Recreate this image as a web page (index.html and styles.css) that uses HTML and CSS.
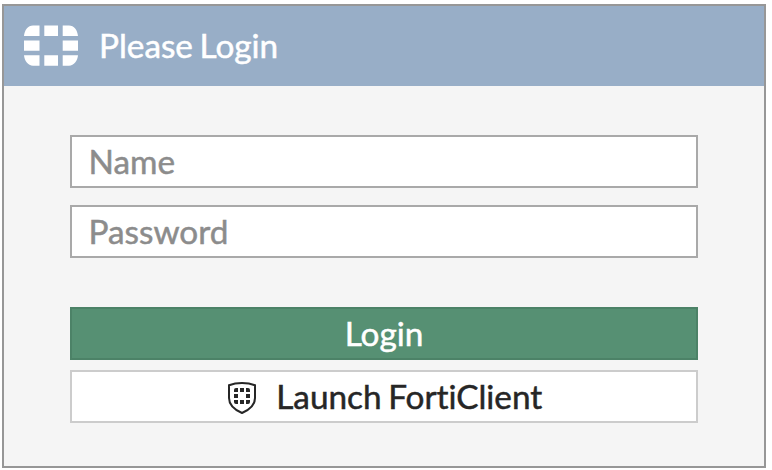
FILE: index.html
```html
<!DOCTYPE html>
<html lang="en">
<head>
<meta charset="utf-8">
<title>Please Login</title>
<link rel="stylesheet" href="styles.css">
</head>
<body>
<main class="panel">
  <header class="panel-header">
    <svg class="logo" viewBox="0 0 54 41" aria-hidden="true">
      <path d="M0 11C.5 5 4 .4 9 .4H15.5V11ZM20.3 .4H34V11H20.3ZM38.7 .4H45C50 .4 53.5 5 54 11H38.7ZM0 15.5H15.5V25.7H0ZM38.7 15.5H54V25.7H38.7ZM0 30.3H15.5V40.7H9C4 40.7 .5 36 0 30.3ZM20.3 30.3H34V40.7H20.3ZM38.7 30.3H54C53.5 36 50 40.7 45 40.7H38.7Z"/>
    </svg>
    <h1 class="title">Please Login</h1>
  </header>
  <form class="form">
    <input class="field" type="text" placeholder="Name" aria-label="Name">
    <input class="field" type="password" placeholder="Password" aria-label="Password">
    <button class="button primary" type="button">Login</button>
    <button class="button secondary" type="button">
      <svg class="shield" viewBox="0 0 30 34" aria-hidden="true">
        <path class="outline" d="M15 2C10.5 2 6 2.7 2 4.2V17C2 24 7 28.5 15 32C23 28.5 28 24 28 17V4.2C24 2.7 19.5 2 15 2Z"/>
        <path d="M9 7H11V11H7V9Q7 7 9 7ZM13 7H17V11H13ZM19 7H21Q23 7 23 9V11H19ZM7 13H11V17H7ZM19 13H23V17H19ZM7 19H11V23H9Q7 23 7 21ZM13 19H17V23H13ZM19 19H23V21Q23 23 21 23H19Z"/>
      </svg>
      <span>Launch FortiClient</span>
    </button>
  </form>
</main>
</body>
</html>
```
FILE: styles.css
```css
* {
  box-sizing: border-box;
}

body {
  margin: 0;
  padding: 4px 6px 2px 2px;
  background: #fff;
  font-family: Lato, "Liberation Sans", sans-serif;
  font-size: 33.33px;
}

.panel {
  height: 464px;
  border: 2px solid #979797;
  background: #f5f5f5;
}

.panel-header {
  display: flex;
  align-items: center;
  gap: 21px;
  height: 80px;
  padding: 0 0 2px 20px;
  background: #98aec7;
  color: #fff;
}

.logo {
  width: 54px;
  height: 41px;
  fill: currentColor;
}

.title,
.field,
.button {
  word-spacing: -2px;
  font-variant-ligatures: none;
  -webkit-text-stroke: 0.5px currentColor;
}

.title {
  margin: 0;
  font-size: 33.33px;
  font-weight: 400;
  line-height: 40px;
}

.form {
  display: flex;
  flex-direction: column;
  padding: 49px 66px 0;
}

.field,
.button {
  width: 100%;
  height: 53px;
  margin: 0;
  border: 2px solid #a9a9a9;
  border-radius: 0;
  font-family: inherit;
  font-size: 33.33px;
  line-height: 40px;
}

.field {
  margin-bottom: 17px;
  padding: 0 16.5px 2px;
  background: #fff;
  color: #262626;
}

.field::placeholder {
  color: #8c8c8c;
  opacity: 1;
  -webkit-text-stroke: 0.5px #8c8c8c;
}

.button {
  display: flex;
  align-items: center;
  justify-content: center;
  padding: 0 0 2px;
}

.primary {
  margin: 32px 0 10px;
  border-color: #4c8267;
  background: #569073;
  color: #fff;
}

.secondary {
  gap: 19.5px;
  padding-left: 1px;
  border-color: #ccc;
  background: #fff;
  color: #262626;
}

.shield {
  width: 30px;
  height: 34px;
  margin-top: 4px;
  fill: currentColor;
}

.outline {
  fill: none;
  stroke: currentColor;
  stroke-width: 2;
}
```
